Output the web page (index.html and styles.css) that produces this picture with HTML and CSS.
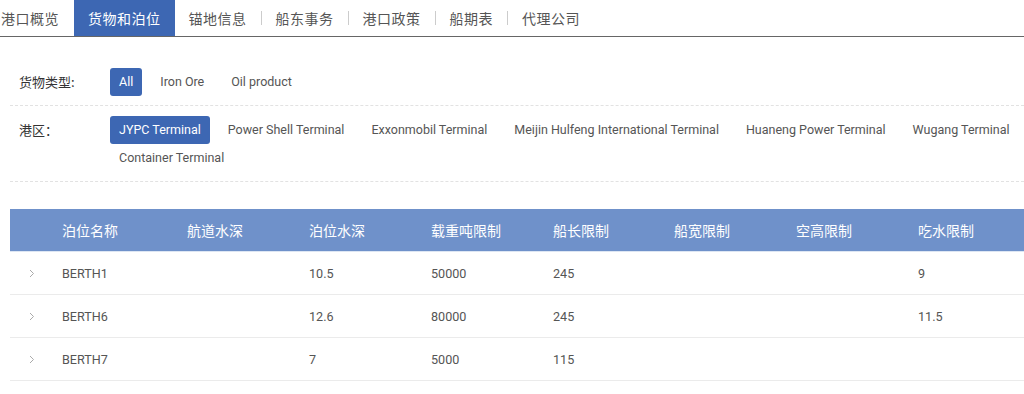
FILE: index.html
```html
<!DOCTYPE html>
<html lang="zh-CN">
<head>
    <meta charset="UTF-8">
    <meta name="viewport" content="width=device-width, initial-scale=1.0">
    <title>货物和泊位</title>
    <link rel="stylesheet" href="styles.css">
</head>
<body>
    <nav class="tabs">
        <a class="tab first">港口概览</a>
        <a class="tab active">货物和泊位</a>
        <a class="tab">锚地信息</a>
        <span class="sep"></span>
        <a class="tab">船东事务</a>
        <span class="sep"></span>
        <a class="tab">港口政策</a>
        <span class="sep"></span>
        <a class="tab">船期表</a>
        <span class="sep"></span>
        <a class="tab">代理公司</a>
    </nav>

    <section class="filters">
        <div class="filter-row">
            <div class="filter-label">货物类型:</div>
            <div class="filter-items">
                <span class="chip selected">All</span>
                <span class="chip">Iron Ore</span>
                <span class="chip">Oil product</span>
            </div>
        </div>
        <div class="filter-row">
            <div class="filter-label">港区：</div>
            <div class="filter-items">
                <span class="chip selected">JYPC Terminal</span>
                <span class="chip">Power Shell Terminal</span>
                <span class="chip">Exxonmobil Terminal</span>
                <span class="chip">Meijin Hulfeng International Terminal</span>
                <span class="chip">Huaneng Power Terminal</span>
                <span class="chip">Wugang Terminal</span>
                <span class="chip">Container Terminal</span>
            </div>
        </div>
    </section>

    <table class="berths">
        <colgroup>
            <col class="c-expand">
            <col class="c-name">
            <col class="c-std">
            <col class="c-std">
            <col class="c-std">
            <col class="c-narrow">
            <col class="c-std">
            <col class="c-std">
            <col>
        </colgroup>
        <thead>
            <tr>
                <th></th>
                <th>泊位名称</th>
                <th>航道水深</th>
                <th>泊位水深</th>
                <th>载重吨限制</th>
                <th>船长限制</th>
                <th>船宽限制</th>
                <th>空高限制</th>
                <th>吃水限制</th>
            </tr>
        </thead>
        <tbody>
            <tr>
                <td class="expand"><svg width="6" height="9" viewBox="0 0 6 9"><path d="M1 1l3.5 3.5L1 8" fill="none" stroke="#aaa" stroke-width="1"/></svg></td>
                <td>BERTH1</td>
                <td></td>
                <td>10.5</td>
                <td>50000</td>
                <td>245</td>
                <td></td>
                <td></td>
                <td>9</td>
            </tr>
            <tr>
                <td class="expand"><svg width="6" height="9" viewBox="0 0 6 9"><path d="M1 1l3.5 3.5L1 8" fill="none" stroke="#aaa" stroke-width="1"/></svg></td>
                <td>BERTH6</td>
                <td></td>
                <td>12.6</td>
                <td>80000</td>
                <td>245</td>
                <td></td>
                <td></td>
                <td>11.5</td>
            </tr>
            <tr>
                <td class="expand"><svg width="6" height="9" viewBox="0 0 6 9"><path d="M1 1l3.5 3.5L1 8" fill="none" stroke="#aaa" stroke-width="1"/></svg></td>
                <td>BERTH7</td>
                <td></td>
                <td>7</td>
                <td>5000</td>
                <td>115</td>
                <td></td>
                <td></td>
                <td></td>
            </tr>
            <tr>
                <td class="expand"><svg width="6" height="9" viewBox="0 0 6 9"><path d="M1 1l3.5 3.5L1 8" fill="none" stroke="#aaa" stroke-width="1"/></svg></td>
                <td>BERTH8</td>
                <td></td>
                <td>12</td>
                <td>30000</td>
                <td>200</td>
                <td></td>
                <td></td>
                <td></td>
            </tr>
        </tbody>
    </table>
</body>
</html>
```

FILE: styles.css
```css
body {
    margin: 0;
    font-family: Roboto, "Noto Sans CJK SC", sans-serif;
    color: #555;
    background-color: #fff;
}
.tabs {
    display: flex;
    align-items: center;
    height: 36px;
    border-bottom: 1px solid #666;
}
.tab {
    display: flex;
    align-items: center;
    height: 100%;
    padding: 0 14px;
    font-size: 14px;
    letter-spacing: 0.5px;
    color: #555;
    font-family: "Noto Sans CJK SC", sans-serif;
}
.tab.first {
    padding: 0 15px 0 1px;
}
.tab.active {
    padding: 0 14px;
    background-color: #3d67b3;
    color: white;
}
.sep {
    width: 1px;
    height: 14px;
    background-color: #ccc;
}
.filters {
    margin: 21px 0 0 10px;
}
.filter-row {
    display: flex;
    padding: 10px 0 9px 9px;
    border-bottom: 1px dashed #e2e2e2;
}
.filter-label {
    width: 91px;
    flex-shrink: 0;
    line-height: 28px;
    font-size: 13px;
    color: #333;
    font-family: "Noto Sans CJK SC", sans-serif;
}
.filter-items {
    flex: 1;
    min-width: 0;
    display: flex;
    flex-wrap: wrap;
    column-gap: 9px;
}
.chip {
    padding: 0 9px;
    line-height: 28px;
    font-size: 12.5px;
    color: #555;
    border-radius: 3px;
}
.chip.selected {
    background-color: #3d67b3;
    color: white;
}
.berths {
    margin: 27px 0 0 10px;
    width: 1014px;
    border-collapse: collapse;
    table-layout: fixed;
}
.c-expand { width: 52px; }
.c-name { width: 125px; }
.c-std { width: 122px; }
.c-narrow { width: 121px; }
.berths th {
    height: 42px;
    padding: 0;
    text-align: left;
    font-weight: normal;
    font-size: 14px;
    color: white;
    background-color: #6f91ca;
    font-family: "Noto Sans CJK SC", sans-serif;
    border-bottom: 1px solid #dde6f3;
}
.berths td {
    height: 42px;
    padding: 0;
    font-size: 12.6px;
    color: #555;
    border-bottom: 1px solid #ebebeb;
}
.berths td.expand {
    padding-left: 19px;
}
.expand svg {
    display: block;
}
```
